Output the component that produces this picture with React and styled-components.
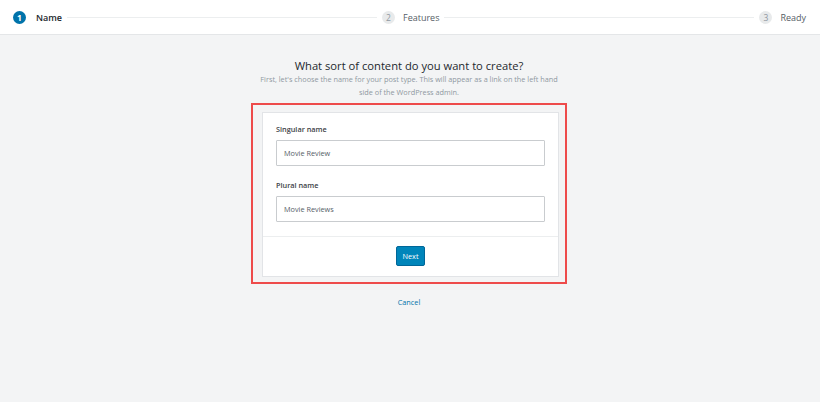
import React, { useState } from 'react';
import styled, { createGlobalStyle } from 'styled-components';

const GlobalStyle = createGlobalStyle`
  html, body {
    margin: 0;
    padding: 0;
    background: #f3f4f5;
    font-family: "Open Sans", "Noto Sans", sans-serif;
  }
`;

const Page = styled.div`
  min-height: 402px;
  background: #f3f4f5;
`;

const Header = styled.header`
  display: flex;
  align-items: center;
  height: 35px;
  padding: 0 14px 0 13px;
  background: #fff;
  border-bottom: 1px solid #e4e6e8;
  box-sizing: border-box;
`;

const Step = styled.div`
  display: flex;
  align-items: center;
  gap: ${(p) => (p.active ? '10px' : '8px')};
  font-size: 9px;
  color: ${(p) => (p.active ? '#23282d' : '#555d66')};
  font-weight: ${(p) => (p.active ? 600 : 400)};
`;

const StepNumber = styled.span`
  display: inline-flex;
  align-items: center;
  justify-content: center;
  width: 13px;
  height: 13px;
  border-radius: 50%;
  font-size: 8.5px;
  font-weight: ${(p) => (p.active ? 700 : 400)};
  background: ${(p) => (p.active ? '#0073aa' : '#e8eaeb')};
  color: ${(p) => (p.active ? '#fff' : '#8f98a1')};
`;

const StepLine = styled.div`
  flex: 1;
  height: 1px;
  background: #eceeef;
  margin: 0 5px;
`;

const Main = styled.main`
  display: flex;
  flex-direction: column;
  align-items: center;
  padding: 23px 2px 0 0;
`;

const Title = styled.h1`
  margin: 0;
  font-size: 11.2px;
  font-weight: 400;
  color: #23282d;
  line-height: 15px;
`;

const Intro = styled.p`
  margin: 0;
  width: 300px;
  text-align: center;
  font-size: 7.3px;
  line-height: 13px;
  color: #8f98a1;
`;

const Highlight = styled.div`
  margin-top: 4px;
  width: 316px;
  box-sizing: border-box;
  border: 2px solid #ee4b4b;
  padding: 7px 6px 5px 9px;
`;

const Card = styled.div`
  background: #fff;
  border: 1px solid #e2e4e7;
`;

const CardBody = styled.div`
  display: flex;
  flex-direction: column;
  gap: 13px;
  padding: 10px 13px 14px 13px;
`;

const Field = styled.div`
  display: flex;
  flex-direction: column;
  gap: 5px;
`;

const Label = styled.label`
  font-size: 7.3px;
  font-weight: 600;
  color: #3c4146;
  line-height: 12px;
`;

const Input = styled.input`
  height: 26px;
  box-sizing: border-box;
  border: 1px solid #c9cccf;
  border-radius: 1px;
  padding: 0 7px;
  font-family: inherit;
  font-size: 7.3px;
  color: #555d66;
  background: #fff;
  outline: none;
`;

const CardFooter = styled.div`
  display: flex;
  justify-content: center;
  padding: 9px 0 10px;
  border-top: 1px solid #eceeef;
`;

const Button = styled.button`
  height: 20px;
  padding: 0 5px;
  border: 1px solid #006799;
  border-radius: 2px;
  background: #0085ba;
  color: #fff;
  font-family: inherit;
  font-size: 7.3px;
  cursor: pointer;
`;

const CancelLink = styled.a`
  margin-top: 13px;
  font-size: 7.3px;
  color: #0073aa;
  text-decoration: none;
  cursor: pointer;
`;

const steps = ['Name', 'Features', 'Ready'];

export default function App() {
  const [singular, setSingular] = useState('Movie Review');
  const [plural, setPlural] = useState('Movie Reviews');

  return (
    <Page>
      <GlobalStyle />
      <Header>
        {steps.map((s, i) => (
          <React.Fragment key={s}>
            {i > 0 && <StepLine />}
            <Step active={i === 0}>
              <StepNumber active={i === 0}>{i + 1}</StepNumber>
              {s}
            </Step>
          </React.Fragment>
        ))}
      </Header>
      <Main>
        <Title>What sort of content do you want to create?</Title>
        <Intro>
          First, let's choose the name for your post type. This will appear as a link on the left hand
          side of the WordPress admin.
        </Intro>
        <Highlight>
          <Card>
            <CardBody>
              <Field>
                <Label>Singular name</Label>
                <Input value={singular} onChange={(e) => setSingular(e.target.value)} />
              </Field>
              <Field>
                <Label>Plural name</Label>
                <Input value={plural} onChange={(e) => setPlural(e.target.value)} />
              </Field>
            </CardBody>
            <CardFooter>
              <Button>Next</Button>
            </CardFooter>
          </Card>
        </Highlight>
        <CancelLink>Cancel</CancelLink>
      </Main>
    </Page>
  );
}
